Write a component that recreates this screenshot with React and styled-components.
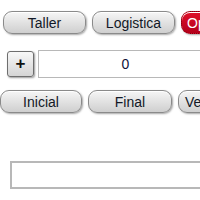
import React from 'react';
import styled, { createGlobalStyle } from 'styled-components';

const Global = createGlobalStyle`
  html, body {
    margin: 0;
    padding: 0;
    background: #fff;
    overflow: hidden;
  }
  body {
    font-family: "Liberation Sans", Arial, sans-serif;
  }
`;

const Page = styled.div`
  width: 260px;
  display: flex;
  flex-direction: column;
`;

const Row = styled.div`
  display: flex;
  align-items: center;
  gap: ${(p) => p.$gap || 6}px;
  padding-left: ${(p) => p.$left || 0}px;
  margin-top: ${(p) => p.$top || 0}px;
`;

const Button = styled.button`
  flex: none;
  box-sizing: border-box;
  width: ${(p) => p.$w || 83}px;
  height: 23px;
  padding: 0 0 0 ${(p) => p.$pad || 0}px;
  font-family: "Liberation Sans", Arial, sans-serif;
  font-size: 14px;
  color: #121826;
  text-align: ${(p) => (p.$pad ? 'left' : 'center')};
  background: linear-gradient(#f6f6f6, #e2e2e2 50%, #cfcfcf);
  border: 1px solid #8a8a8a;
  border-radius: 9px;
  box-shadow: 1px 1px 2px rgba(0, 0, 0, 0.35), inset 0 1px 0 #fff;
  white-space: nowrap;
  overflow: hidden;
`;

const RedButton = styled(Button)`
  color: #fff;
  background: linear-gradient(#e0102a, #b3001a);
  border: 1px dotted #7a0010;
`;

const PlusButton = styled.button`
  flex: none;
  box-sizing: border-box;
  width: 27px;
  height: 26px;
  padding: 0;
  font-family: "Liberation Sans", Arial, sans-serif;
  font-size: 17px;
  font-weight: bold;
  color: #111;
  background: linear-gradient(#f8f8f8, #d4d4d4);
  border: 1px solid #6e6e6e;
  border-radius: 3px;
  box-shadow: 1px 1px 2px rgba(0, 0, 0, 0.4);
`;

const Field = styled.input`
  flex: none;
  box-sizing: border-box;
  width: ${(p) => p.$w}px;
  height: 28px;
  margin: 0;
  border: ${(p) => (p.$thick ? 2 : 1)}px solid #b8b8b8;
  background: #fff;
  font-family: "Liberation Sans", Arial, sans-serif;
  font-size: 14px;
  color: #10123a;
  text-align: center;
  outline: none;
`;

export default function App() {
  return (
    <Page>
      <Global />
      <Row $left={3} $top={11}>
        <Button>Taller</Button>
        <Button>Logistica</Button>
        <RedButton $pad={5}>Operaciones</RedButton>
      </Row>
      <Row $left={7} $top={16} $gap={4}>
        <PlusButton>+</PlusButton>
        <Field $w={175} readOnly value="0" />
      </Row>
      <Row $top={12} $gap={6}>
        <Button $w={82}>Inicial</Button>
        <Button $w={84}>Final</Button>
        <Button $w={40} $pad={6}>Ver</Button>
      </Row>
      <Row $left={10} $top={48}>
        <Field $w={200} $thick readOnly value="" />
      </Row>
    </Page>
  );
}
